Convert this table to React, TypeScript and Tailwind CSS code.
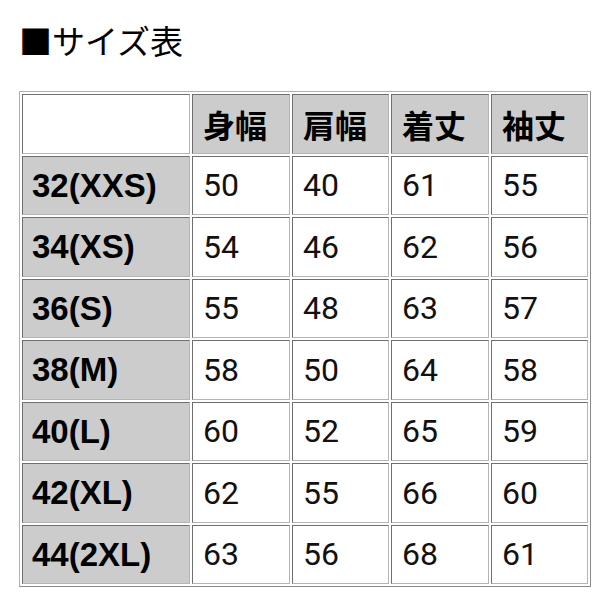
import React from "react";

const headers = ["身幅", "肩幅", "着丈", "袖丈"];
const rows: [string, number[]][] = [
  ["32(XXS)", [50, 40, 61, 55]],
  ["34(XS)", [54, 46, 62, 56]],
  ["36(S)", [55, 48, 63, 57]],
  ["38(M)", [58, 50, 64, 58]],
  ["40(L)", [60, 52, 65, 59]],
  ["42(XL)", [62, 55, 66, 60]],
  ["44(2XL)", [63, 56, 68, 61]],
];

const cell =
  "h-[59.5px] p-0 align-middle border border-t-[#6f6f6f] border-l-[#6f6f6f] border-b-[#b5b5b5] border-r-[#b5b5b5]";

export default function App() {
  return (
    <div className="w-[595px] h-[595px] bg-white overflow-hidden">
      <div className="pl-[19px] pt-[22px]">
        <h1 className="text-[33px] leading-[36px] font-normal text-black font-['Noto_Sans_CJK_JP',sans-serif]">
          ■サイズ表
        </h1>
      </div>
      <div className="pl-[19px] pt-[33px]">
        <table className="table-fixed border-separate border-spacing-[2px] border border-t-[#b0b0b0] border-l-[#b0b0b0] border-b-[#8a8a8a] border-r-[#8a8a8a] w-[572px]">
          <colgroup>
            <col className="w-[168px]" />
            <col className="w-[98px]" />
            <col className="w-[97px]" />
            <col className="w-[98px]" />
            <col className="w-[97px]" />
          </colgroup>
          <thead>
            <tr>
              <th className={`${cell} bg-white`}></th>
              {headers.map((h) => (
                <th
                  key={h}
                  className={`${cell} bg-[#cccccc] text-left pl-[10px] text-[32px] font-bold text-black font-['Noto_Sans_CJK_JP',sans-serif] leading-none`}
                >
                  {h}
                </th>
              ))}
            </tr>
          </thead>
          <tbody>
            {rows.map(([label, vals]) => (
              <tr key={label}>
                <td
                  className={`${cell} bg-[#cccccc] pl-[9px] text-[33px] font-bold text-black font-['Liberation_Sans',Arial,sans-serif] leading-none`}
                >
                  {label}
                </td>
                {vals.map((v, i) => (
                  <td
                    key={i}
                    className={`${cell} bg-white pl-[10px] text-[32px] text-[#111] font-['Roboto',sans-serif] leading-none`}
                  >
                    {v}
                  </td>
                ))}
              </tr>
            ))}
          </tbody>
        </table>
      </div>
    </div>
  );
}
